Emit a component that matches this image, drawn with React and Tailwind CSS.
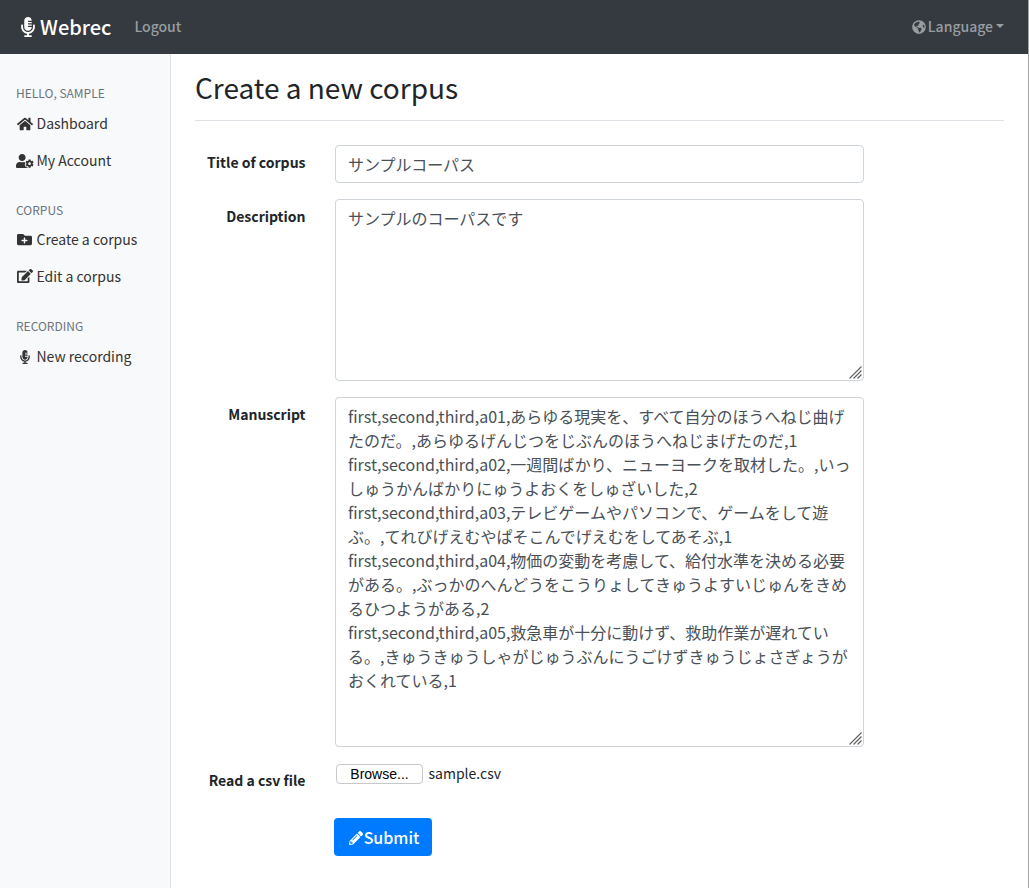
import React from "react";
import {
  FaMicrophoneAlt,
  FaHome,
  FaUserCog,
  FaFolderPlus,
  FaEdit,
  FaGlobeAmericas,
  FaPencilAlt,
} from "react-icons/fa";

const sections = [
  {
    title: "HELLO, SAMPLE",
    titleHeight: "h-[22px]",
    spacing: "mb-[20.5px]",
    items: [
      { label: "Dashboard", Icon: FaHome, size: 16 },
      { label: "My Account", Icon: FaUserCog, size: 18 },
    ],
  },
  {
    title: "CORPUS",
    titleHeight: "h-[21px]",
    spacing: "mb-[21.5px]",
    items: [
      { label: "Create a corpus", Icon: FaFolderPlus, size: 15 },
      { label: "Edit a corpus", Icon: FaEdit, size: 16 },
    ],
  },
  {
    title: "RECORDING",
    titleHeight: "h-[22px]",
    spacing: "mb-0",
    items: [{ label: "New recording", Icon: FaMicrophoneAlt, size: 14 }],
  },
];

const manuscript = [
  "first,second,third,a01,あらゆる現実を、すべて自分のほうへねじ曲げ",
  "たのだ。,あらゆるげんじつをじぶんのほうへねじまげたのだ,1",
  "first,second,third,a02,一週間ばかり、ニューヨークを取材した。,いっ",
  "しゅうかんばかりにゅうよおくをしゅざいした,2",
  "first,second,third,a03,テレビゲームやパソコンで、ゲームをして遊",
  "ぶ。,てれびげえむやぱそこんでげえむをしてあそぶ,1",
  "first,second,third,a04,物価の変動を考慮して、給付水準を決める必要",
  "がある。,ぶっかのへんどうをこうりょしてきゅうよすいじゅんをきめ",
  "るひつようがある,2",
  "first,second,third,a05,救急車が十分に動けず、救助作業が遅れてい",
  "る。,きゅうきゅうしゃがじゅうぶんにうごけずきゅうじょさぎょうが",
  "おくれている,1",
];

function ResizeGrip() {
  return (
    <svg className="absolute right-[2px] bottom-[2px]" width="13" height="13" viewBox="0 0 13 13">
      <path d="M0.5 12.5L12.5 0.5M4.5 12.5L12.5 4.5M8.5 12.5L12.5 8.5" stroke="#5f5f5f" strokeWidth="1.1" fill="none" />
    </svg>
  );
}

function Label({ children }) {
  return <div className="w-[110.5px] shrink-0 pt-[5px] text-right text-[14px] leading-6 font-bold">{children}</div>;
}

function TextBox({ lines, className }) {
  return (
    <div className={"relative w-[529px] rounded border border-[#ced4da] px-3 text-base leading-6 whitespace-nowrap text-[#495057] " + className}>
      {lines.map((line) => (
        <div key={line}>{line}</div>
      ))}
    </div>
  );
}

export default function App() {
  return (
    <div lang="ja" className="flex h-[888px] w-[1029px] border-r border-[#a3a3a3] bg-white font-['Noto_Sans_CJK_JP',sans-serif] text-[#212529]">
      <div className="flex min-w-0 flex-1 flex-col">
        <header className="flex h-[54px] shrink-0 items-center bg-[#343a40] pr-6 pl-5">
          <div className="flex items-center text-white">
            <FaMicrophoneAlt className="mr-1 h-5 w-4" />
            <span className="text-xl leading-[30px] font-medium">Webrec</span>
          </div>
          <span className="mb-[2px] ml-[23px] text-[14px] leading-6 font-medium text-[#9a9da0]">Logout</span>
          <div className="mb-[2px] ml-auto flex items-center text-[#9a9da0]">
            <FaGlobeAmericas className="mt-px mr-[2px] size-[14px]" />
            <span className="text-[14px] leading-6 font-medium">Language</span>
            <svg className="ml-[3px]" width="8" height="4" viewBox="0 0 8 4">
              <path d="M0 0H8L4 4Z" fill="currentColor" />
            </svg>
          </div>
        </header>
        <div className="flex min-h-0 flex-1">
          <aside className="flex w-[171px] shrink-0 flex-col border-r border-[#dcdfe2] bg-[#f8f9fa] pt-[29px] pl-4">
            {sections.map(({ title, titleHeight, spacing, items }) => (
              <section key={title} className={spacing}>
                <h2 className={"text-[12px] leading-[19px] text-[#6c757d] " + titleHeight}>{title}</h2>
                {items.map(({ label, Icon, size }) => (
                  <div key={label} className="flex h-[37px] items-center text-[14px] text-[#333]">
                    <span className="mr-[3px] flex w-[17.5px] justify-center">
                      <Icon size={size} />
                    </span>
                    <span>{label}</span>
                  </div>
                ))}
              </section>
            ))}
          </aside>
          <main className="flex-1 pt-[15px] pr-6 pl-6">
            <h1 className="h-[52px] border-b border-[#dee2e6] text-[28px] leading-[36px]">Create a new corpus</h1>
            <div className="mt-6 flex gap-[29.5px]">
              <Label>Title of corpus</Label>
              <TextBox className="h-[38px] pt-[6px]" lines={["サンプルコーパス"]} />
            </div>
            <div className="mt-4 flex gap-[29.5px]">
              <Label>Description</Label>
              <div className="relative">
                <TextBox className="h-[182px] pt-[6px]" lines={["サンプルのコーパスです"]} />
                <ResizeGrip />
              </div>
            </div>
            <div className="mt-4 flex gap-[29.5px]">
              <Label>Manuscript</Label>
              <div className="relative">
                <TextBox className="h-[350px] pt-[6px]" lines={manuscript} />
                <ResizeGrip />
              </div>
            </div>
            <div className="mt-4 flex gap-[29.5px]">
              <Label>Read a csv file</Label>
              <div className="flex h-[21px] items-center pl-[1px]">
                <button className="h-5 w-[87px] rounded border border-[#c8c8c8] bg-white font-['Liberation_Sans',sans-serif] text-sm leading-4 text-black">Browse...</button>
                <span className="mb-[2px] ml-[5.5px] text-[14px] leading-5">sample.csv</span>
              </div>
            </div>
            <button className="mt-[26px] ml-[139px] flex h-[38px] w-[98px] items-center justify-center rounded bg-[#007bff] pl-[2px] text-base font-medium text-white">
              <FaPencilAlt className="mt-[2px] mr-px size-[14px]" />
              Submit
            </button>
          </main>
        </div>
      </div>
    </div>
  );
}
